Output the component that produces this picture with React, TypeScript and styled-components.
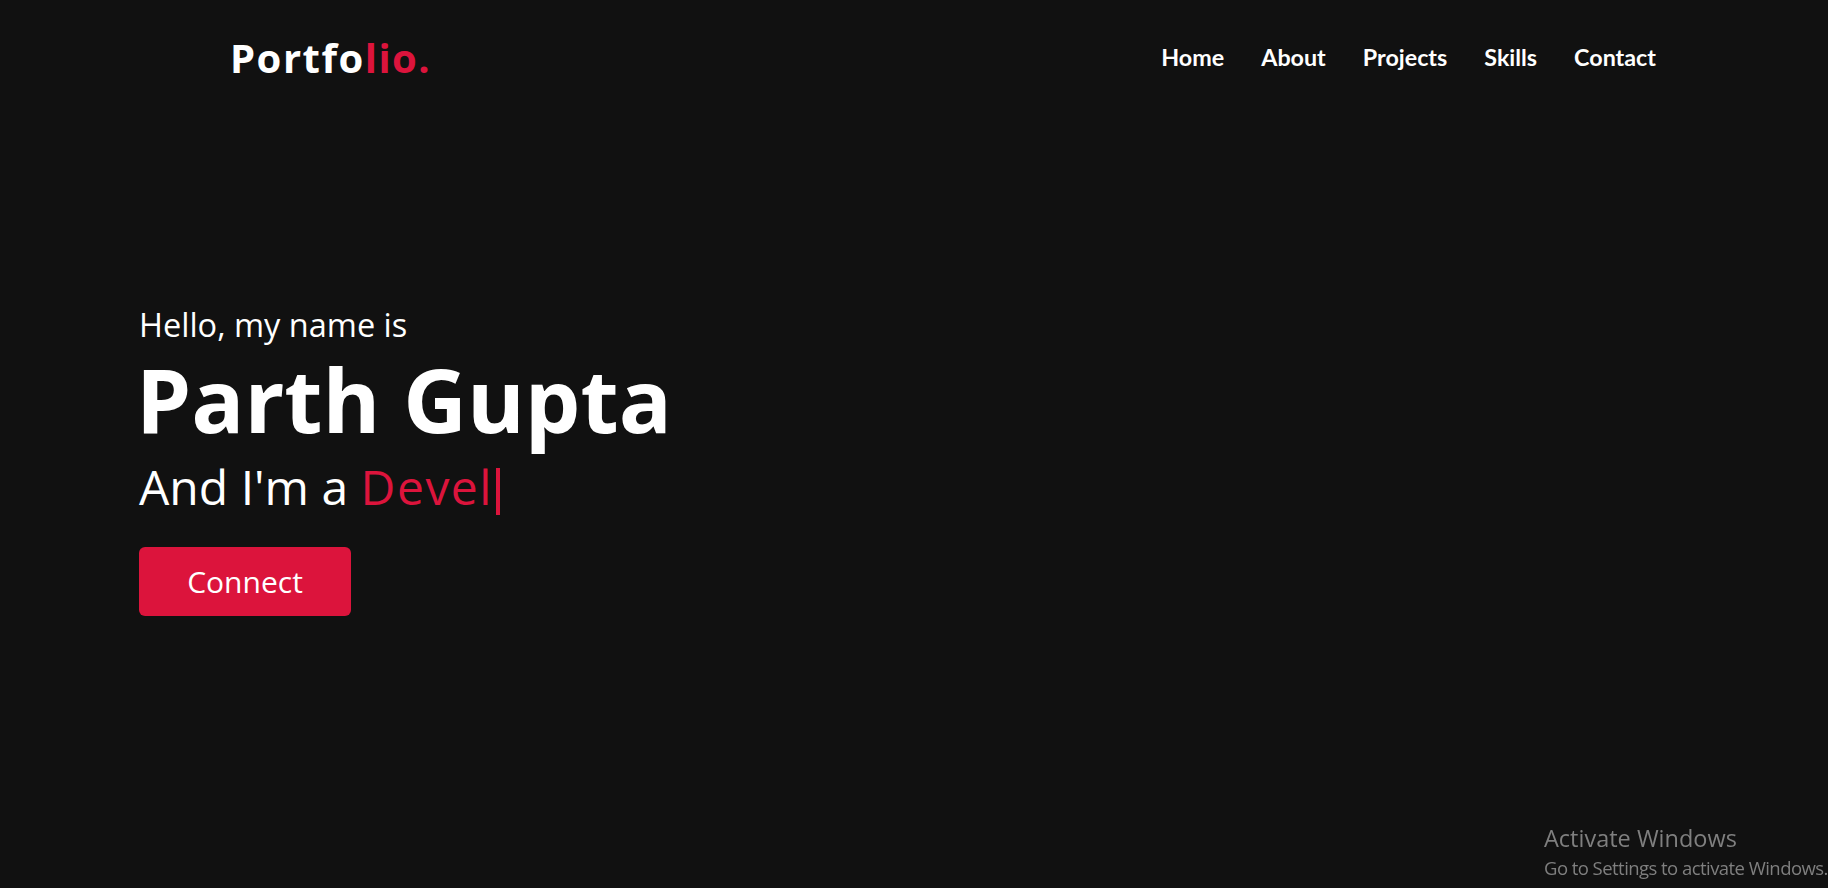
import React from "react";
import styled, { createGlobalStyle } from "styled-components";

const GlobalStyle = createGlobalStyle`
  * { box-sizing: border-box; margin: 0; padding: 0; }
  html, body { background: #111111; }
  body { margin: 0; font-family: "Open Sans", "Noto Sans", sans-serif; color: #ffffff; }
`;

const Page = styled.div`
  min-height: 100vh;
  background: #111111;
`;

const Header = styled.header`
  display: flex;
  align-items: center;
  justify-content: space-between;
  padding: 38px 172px 0 230px;
`;

const Logo = styled.a`
  font-family: "Open Sans", sans-serif;
  font-size: 40px;
  line-height: 1;
  font-weight: 700;
  letter-spacing: 1.5px;
  color: #ffffff;
  text-decoration: none;
`;

const Accent = styled.span`
  color: #dc143c;
`;

const NavList = styled.nav`
  display: flex;
  align-items: center;
  gap: 37px;
`;

const NavLink = styled.a`
  font-family: "Lato", sans-serif;
  font-size: 23.3px;
  line-height: 1;
  font-weight: 700;
  color: #ffffff;
  text-decoration: none;
`;

const Hero = styled.section`
  display: flex;
  flex-direction: column;
  align-items: flex-start;
  padding: 231px 0 0 139px;
`;

const Greeting = styled.div`
  font-size: 32.5px;
  line-height: 1;
  font-weight: 400;
`;

const Name = styled.h1`
  margin-top: 13px;
  margin-left: -3px;
  font-size: 88px;
  line-height: 1;
  font-weight: 700;
`;

const Role = styled.div`
  margin-top: 20px;
  font-size: 48px;
  line-height: 1;
  font-weight: 400;
`;

const Typed = styled.span`
  color: #dc143c;
  letter-spacing: 1.5px;
`;

const Caret = styled.span`
  display: inline-block;
  width: 4.5px;
  height: 47px;
  margin-left: 3px;
  vertical-align: -10px;
  background: #dc143c;
`;

const ConnectButton = styled.a`
  margin-top: 32px;
  width: 212px;
  height: 69px;
  display: flex;
  align-items: center;
  justify-content: center;
  background: #dc143c;
  border-radius: 6px;
  font-size: 30px;
  font-weight: 400;
  color: #ffffff;
  text-decoration: none;
`;

const Watermark = styled.div`
  position: fixed;
  right: 0;
  bottom: 11px;
  width: 284px;
  display: flex;
  flex-direction: column;
  gap: 8px;
  font-family: "Open Sans", "Noto Sans", sans-serif;
  color: #7f7f7f;
  white-space: nowrap;
`;

const WatermarkTitle = styled.div`
  font-size: 23.5px;
  line-height: 1;
`;

const WatermarkText = styled.div`
  font-size: 18.5px;
  line-height: 1;
  letter-spacing: -0.55px;
`;

export default function App() {
  return (
    <Page>
      <GlobalStyle />
      <Header>
        <Logo href="#">
          Portfo<Accent>lio.</Accent>
        </Logo>
        <NavList>
          {["Home", "About", "Projects", "Skills", "Contact"].map((item) => (
            <NavLink key={item} href="#">
              {item}
            </NavLink>
          ))}
        </NavList>
      </Header>
      <Hero>
        <Greeting>Hello, my name is</Greeting>
        <Name>Parth Gupta</Name>
        <Role>
          And I'm a <Typed>Devel</Typed>
          <Caret />
        </Role>
        <ConnectButton href="#">Connect</ConnectButton>
      </Hero>
      <Watermark>
        <WatermarkTitle>Activate Windows</WatermarkTitle>
        <WatermarkText>Go to Settings to activate Windows.</WatermarkText>
      </Watermark>
    </Page>
  );
}
